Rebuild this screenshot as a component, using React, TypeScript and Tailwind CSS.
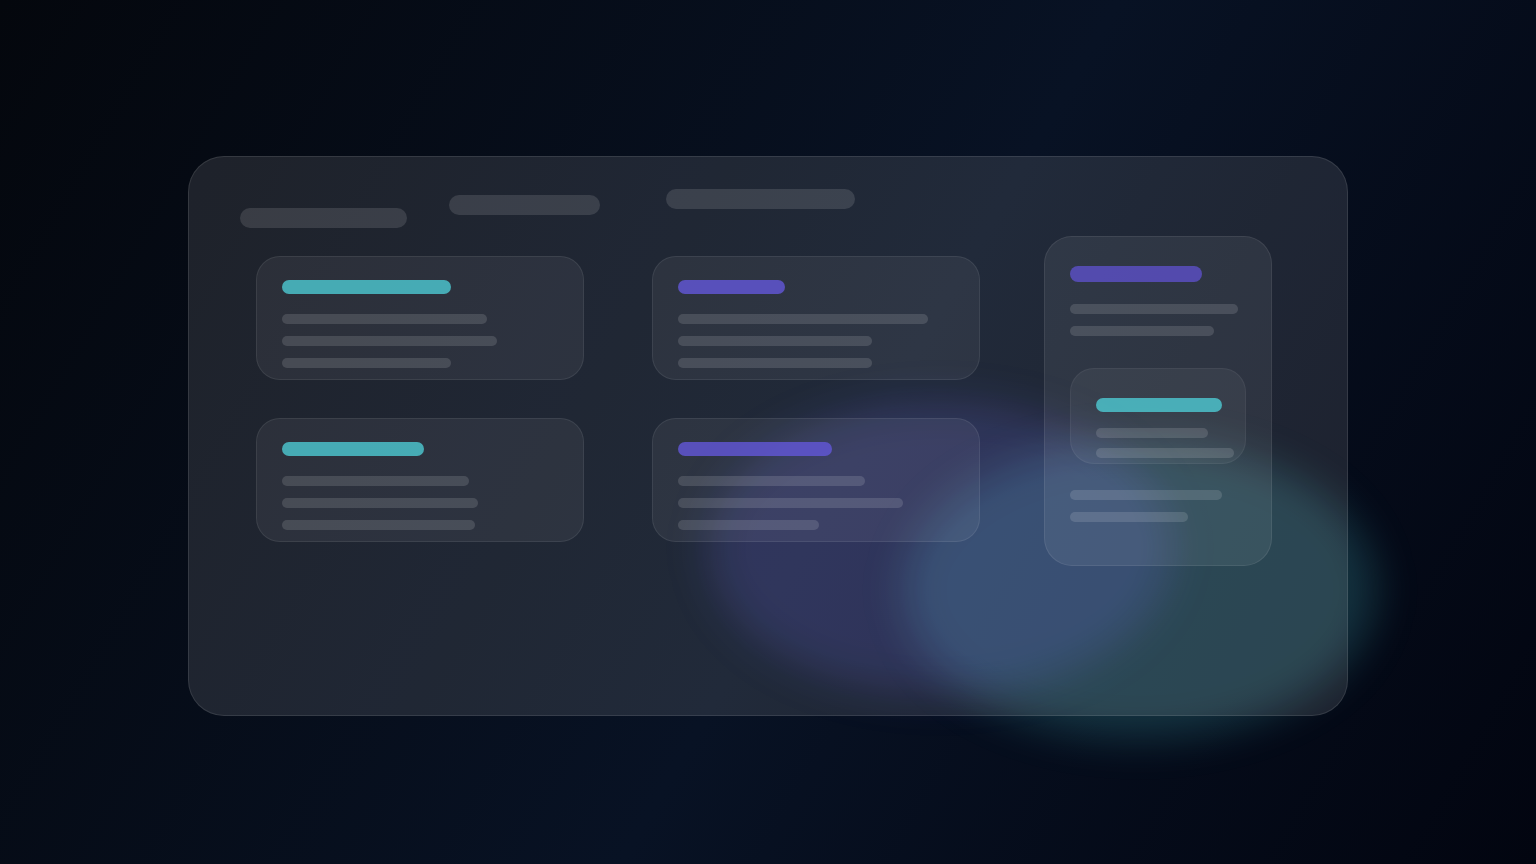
type Tone = 'teal' | 'violet';

const tones: Record<Tone, string> = {
  teal: 'bg-[#4ecad3]/80',
  violet: 'bg-[#6357d9]/80',
};

type CardData = { tone: Tone; title: string; lines: string[] };

const cards: CardData[] = [
  { tone: 'teal', title: 'w-[169px]', lines: ['w-[205px]', 'w-[215px]', 'w-[169px]'] },
  { tone: 'violet', title: 'w-[107px]', lines: ['w-[250px]', 'w-[194px]', 'w-[194px]'] },
  { tone: 'teal', title: 'w-[142px]', lines: ['w-[187px]', 'w-[196px]', 'w-[193px]'] },
  { tone: 'violet', title: 'w-[154px]', lines: ['w-[187px]', 'w-[225px]', 'w-[141px]'] },
];

function Line({ width }: { width: string }) {
  return <div className={`h-2.5 max-w-full rounded-[5px] bg-white/13 ${width}`} />;
}

function Card({ tone, title, lines }: CardData) {
  return (
    <article className="rounded-3xl border border-white/8 bg-white/6 px-[25px] pt-[23px] pb-[11px]">
      <div className={`h-3.5 max-w-full rounded-full ${tones[tone]} ${title}`} />
      <div className="mt-5 flex flex-col gap-3">
        {lines.map((width, i) => (
          <Line key={i} width={width} />
        ))}
      </div>
    </article>
  );
}

function SidePanel() {
  return (
    <aside className="mt-[47px] w-[228px] shrink-0 rounded-[28px] border border-white/8 bg-white/7 px-[25px] pt-[29px] pb-[43px]">
      <div className="h-4 w-[132px] rounded-full bg-[#5d50c8]/80" />
      <div className="mt-[22px] flex flex-col gap-3">
        <Line width="w-[168px]" />
        <Line width="w-[144px]" />
      </div>
      <div className="mt-8 rounded-3xl border border-white/5 bg-white/5 pt-[29px] pr-[11px] pb-[5px] pl-[25px]">
        <div className="h-3.5 w-[126px] rounded-full bg-[#4ecad3]/80" />
        <div className="mt-4 flex flex-col gap-2.5">
          <Line width="w-[112px]" />
          <Line width="w-[138px]" />
        </div>
      </div>
      <div className="mt-[26px] flex flex-col gap-3">
        <Line width="w-[152px]" />
        <Line width="w-[118px]" />
      </div>
    </aside>
  );
}

export default function App() {
  return (
    <main className="flex min-h-screen items-center justify-center overflow-hidden bg-[linear-gradient(120deg,#04070d_0%,#081224_55%,#020510_100%)] pt-2">
      <div className="relative w-full max-w-[1160px]">
        <div className="absolute top-[286px] left-[716px] h-[296px] w-[472px] rounded-[50%] bg-[#4fd1dc]/20 blur-[20px]" />
        <div className="absolute top-[246px] left-[520px] h-[292px] w-[464px] rounded-[50%] bg-[#615ce7]/20 blur-[20px]" />
        <section className="relative flex gap-16 rounded-[36px] border border-white/10 bg-white/10 pt-8 pr-[75px] pb-[149px] pl-[51px]">
          <div className="min-w-0 flex-1">
            <header className="flex h-[39px] items-start">
              <div className="mt-[19px] h-5 w-[167px] rounded-full bg-white/12" />
              <div className="mt-1.5 ml-[42px] h-5 w-[151px] rounded-full bg-white/12" />
              <div className="ml-[66px] h-5 w-[189px] rounded-full bg-white/12" />
            </header>
            <div className="mt-7 ml-4 grid grid-cols-2 gap-x-[68px] gap-y-[38px]">
              {cards.map((card, i) => (
                <Card key={i} {...card} />
              ))}
            </div>
          </div>
          <SidePanel />
        </section>
      </div>
    </main>
  );
}
